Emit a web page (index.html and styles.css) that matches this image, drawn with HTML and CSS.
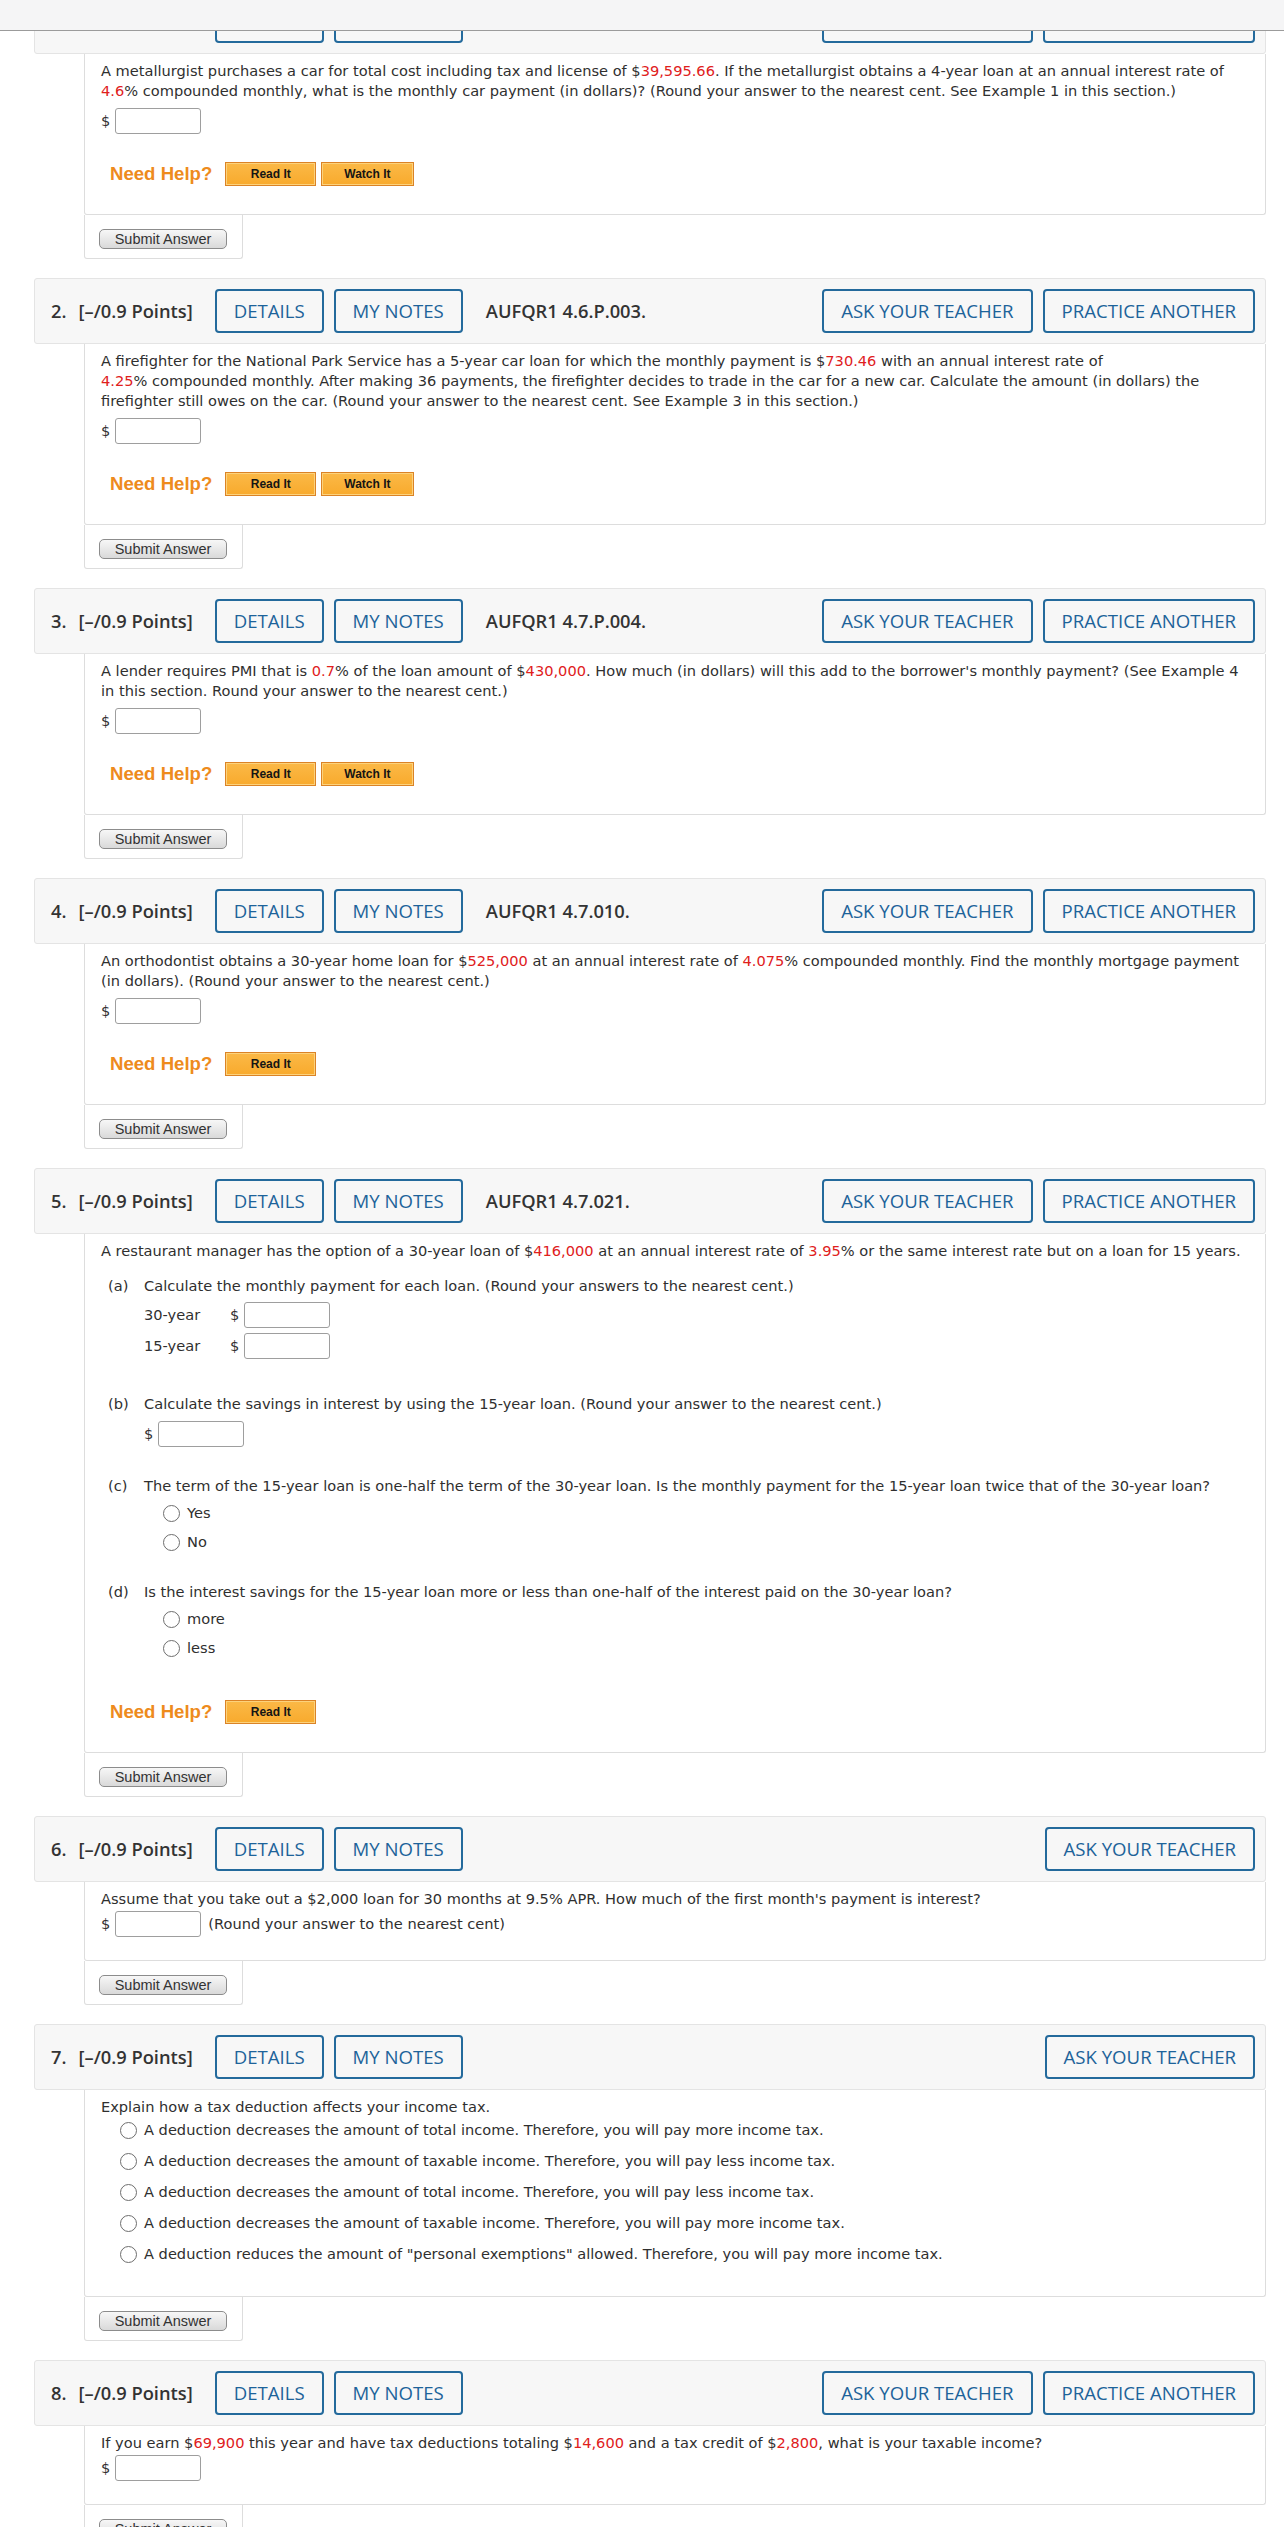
FILE: index.html
```html
<!DOCTYPE html>
<html lang="en">
<head>
<meta charset="utf-8">
<title>Assignment</title>
<link rel="stylesheet" href="styles.css">
</head>
<body>
<div class="topbar"></div>

<div class="questions">

  <!-- Q1 -->
  <section class="q">
    <div class="qhead">
      <span class="qnum">1.</span><span class="pts">[–/0.9 Points]</span>
      <button class="hbtn">DETAILS</button><button class="hbtn">MY NOTES</button>
      <span class="code">AUFQR1 4.6.P.001.</span>
      <span class="spacer"></span>
      <button class="hbtn">ASK YOUR TEACHER</button><button class="hbtn">PRACTICE ANOTHER</button>
    </div>
    <div class="qbody">
      <p class="stem">A metallurgist purchases a car for total cost including tax and license of $<span class="red">39,595.66</span>. If the metallurgist obtains a 4-year loan at an annual interest rate of <span class="red">4.6</span>% compounded monthly, what is the monthly car payment (in dollars)? (Round your answer to the nearest cent. See Example 1 in this section.)</p>
      <div class="ans"><span class="dollar">$</span><span class="inp"></span></div>
      <div class="help"><span class="nh">Need Help?</span><button class="hb">Read It</button><button class="hb">Watch It</button></div>
    </div>
    <div class="submit"><button class="sbtn">Submit Answer</button></div>
  </section>

  <!-- Q2 -->
  <section class="q">
    <div class="qhead">
      <span class="qnum">2.</span><span class="pts">[–/0.9 Points]</span>
      <button class="hbtn">DETAILS</button><button class="hbtn">MY NOTES</button>
      <span class="code">AUFQR1 4.6.P.003.</span>
      <span class="spacer"></span>
      <button class="hbtn">ASK YOUR TEACHER</button><button class="hbtn">PRACTICE ANOTHER</button>
    </div>
    <div class="qbody">
      <p class="stem">A firefighter for the National Park Service has a 5-year car loan for which the monthly payment is $<span class="red">730.46</span> with an annual interest rate of<br><span class="red">4.25</span>% compounded monthly. After making 36 payments, the firefighter decides to trade in the car for a new car. Calculate the amount (in dollars) the firefighter still owes on the car. (Round your answer to the nearest cent. See Example 3 in this section.)</p>
      <div class="ans"><span class="dollar">$</span><span class="inp"></span></div>
      <div class="help"><span class="nh">Need Help?</span><button class="hb">Read It</button><button class="hb">Watch It</button></div>
    </div>
    <div class="submit"><button class="sbtn">Submit Answer</button></div>
  </section>

  <!-- Q3 -->
  <section class="q">
    <div class="qhead">
      <span class="qnum">3.</span><span class="pts">[–/0.9 Points]</span>
      <button class="hbtn">DETAILS</button><button class="hbtn">MY NOTES</button>
      <span class="code">AUFQR1 4.7.P.004.</span>
      <span class="spacer"></span>
      <button class="hbtn">ASK YOUR TEACHER</button><button class="hbtn">PRACTICE ANOTHER</button>
    </div>
    <div class="qbody">
      <p class="stem">A lender requires PMI that is <span class="red">0.7</span>% of the loan amount of $<span class="red">430,000</span>. How much (in dollars) will this add to the borrower's monthly payment? (See Example 4 in this section. Round your answer to the nearest cent.)</p>
      <div class="ans"><span class="dollar">$</span><span class="inp"></span></div>
      <div class="help"><span class="nh">Need Help?</span><button class="hb">Read It</button><button class="hb">Watch It</button></div>
    </div>
    <div class="submit"><button class="sbtn">Submit Answer</button></div>
  </section>

  <!-- Q4 -->
  <section class="q">
    <div class="qhead">
      <span class="qnum">4.</span><span class="pts">[–/0.9 Points]</span>
      <button class="hbtn">DETAILS</button><button class="hbtn">MY NOTES</button>
      <span class="code">AUFQR1 4.7.010.</span>
      <span class="spacer"></span>
      <button class="hbtn">ASK YOUR TEACHER</button><button class="hbtn">PRACTICE ANOTHER</button>
    </div>
    <div class="qbody">
      <p class="stem">An orthodontist obtains a 30-year home loan for $<span class="red">525,000</span> at an annual interest rate of <span class="red">4.075</span>% compounded monthly. Find the monthly mortgage payment (in dollars). (Round your answer to the nearest cent.)</p>
      <div class="ans"><span class="dollar">$</span><span class="inp"></span></div>
      <div class="help"><span class="nh">Need Help?</span><button class="hb">Read It</button></div>
    </div>
    <div class="submit"><button class="sbtn">Submit Answer</button></div>
  </section>

  <!-- Q5 -->
  <section class="q">
    <div class="qhead">
      <span class="qnum">5.</span><span class="pts">[–/0.9 Points]</span>
      <button class="hbtn">DETAILS</button><button class="hbtn">MY NOTES</button>
      <span class="code">AUFQR1 4.7.021.</span>
      <span class="spacer"></span>
      <button class="hbtn">ASK YOUR TEACHER</button><button class="hbtn">PRACTICE ANOTHER</button>
    </div>
    <div class="qbody">
      <p class="stem">A restaurant manager has the option of a 30-year loan of $<span class="red">416,000</span> at an annual interest rate of <span class="red">3.95</span>% or the same interest rate but on a loan for 15 years.</p>

      <div class="part part-a">
        <span class="plabel">(a)</span>
        <div class="pcontent">
          <p class="ptext">Calculate the monthly payment for each loan. (Round your answers to the nearest cent.)</p>
          <div class="subrow first"><span class="sublabel">30-year</span><span class="dollar">$</span><span class="inp"></span></div>
          <div class="subrow"><span class="sublabel">15-year</span><span class="dollar">$</span><span class="inp"></span></div>
        </div>
      </div>

      <div class="part part-b">
        <span class="plabel">(b)</span>
        <div class="pcontent">
          <p class="ptext">Calculate the savings in interest by using the 15-year loan. (Round your answer to the nearest cent.)</p>
          <div class="ans"><span class="dollar">$</span><span class="inp"></span></div>
        </div>
      </div>

      <div class="part part-c">
        <span class="plabel">(c)</span>
        <div class="pcontent">
          <p class="ptext">The term of the 15-year loan is one-half the term of the 30-year loan. Is the monthly payment for the 15-year loan twice that of the 30-year loan?</p>
          <div class="opts indent">
            <label class="opt"><span class="radio"></span>Yes</label>
            <label class="opt"><span class="radio"></span>No</label>
          </div>
        </div>
      </div>

      <div class="part part-d">
        <span class="plabel">(d)</span>
        <div class="pcontent">
          <p class="ptext">Is the interest savings for the 15-year loan more or less than one-half of the interest paid on the 30-year loan?</p>
          <div class="opts indent">
            <label class="opt"><span class="radio"></span>more</label>
            <label class="opt"><span class="radio"></span>less</label>
          </div>
        </div>
      </div>

      <div class="help help-far"><span class="nh">Need Help?</span><button class="hb">Read It</button></div>
    </div>
    <div class="submit"><button class="sbtn">Submit Answer</button></div>
  </section>

  <!-- Q6 -->
  <section class="q">
    <div class="qhead">
      <span class="qnum">6.</span><span class="pts">[–/0.9 Points]</span>
      <button class="hbtn">DETAILS</button><button class="hbtn">MY NOTES</button>
      <span class="spacer"></span>
      <button class="hbtn">ASK YOUR TEACHER</button>
    </div>
    <div class="qbody qbody-short">
      <p class="stem">Assume that you take out a $2,000 loan for 30 months at 9.5% APR. How much of the first month's payment is interest?</p>
      <div class="ans tight"><span class="dollar">$</span><span class="inp"></span><span class="after">(Round your answer to the nearest cent)</span></div>
    </div>
    <div class="submit"><button class="sbtn">Submit Answer</button></div>
  </section>

  <!-- Q7 -->
  <section class="q">
    <div class="qhead">
      <span class="qnum">7.</span><span class="pts">[–/0.9 Points]</span>
      <button class="hbtn">DETAILS</button><button class="hbtn">MY NOTES</button>
      <span class="spacer"></span>
      <button class="hbtn">ASK YOUR TEACHER</button>
    </div>
    <div class="qbody qbody-mc">
      <p class="stem">Explain how a tax deduction affects your income tax.</p>
      <div class="opts mc">
        <label class="opt"><span class="radio"></span>A deduction decreases the amount of total income. Therefore, you will pay more income tax.</label>
        <label class="opt"><span class="radio"></span>A deduction decreases the amount of taxable income. Therefore, you will pay less income tax.</label>
        <label class="opt"><span class="radio"></span>A deduction decreases the amount of total income. Therefore, you will pay less income tax.</label>
        <label class="opt"><span class="radio"></span>A deduction decreases the amount of taxable income. Therefore, you will pay more income tax.</label>
        <label class="opt"><span class="radio"></span>A deduction reduces the amount of "personal exemptions" allowed. Therefore, you will pay more income tax.</label>
      </div>
    </div>
    <div class="submit"><button class="sbtn">Submit Answer</button></div>
  </section>

  <!-- Q8 -->
  <section class="q">
    <div class="qhead">
      <span class="qnum">8.</span><span class="pts">[–/0.9 Points]</span>
      <button class="hbtn">DETAILS</button><button class="hbtn">MY NOTES</button>
      <span class="spacer"></span>
      <button class="hbtn">ASK YOUR TEACHER</button><button class="hbtn">PRACTICE ANOTHER</button>
    </div>
    <div class="qbody qbody-short">
      <p class="stem">If you earn $<span class="red">69,900</span> this year and have tax deductions totaling $<span class="red">14,600</span> and a tax credit of $<span class="red">2,800</span>, what is your taxable income?</p>
      <div class="ans tight"><span class="dollar">$</span><span class="inp"></span></div>
    </div>
    <div class="submit"><button class="sbtn">Submit Answer</button></div>
  </section>

</div>
</body>
</html>
```

FILE: styles.css
```css
* { box-sizing: border-box; }

html, body {
  margin: 0;
  padding: 0;
  background: #ffffff;
}

body {
  font-family: "DejaVu Sans", Verdana, sans-serif;
  font-size: 14.6px;
  line-height: 20px;
  color: #2f2f2f;
}

p { margin: 0; }

button {
  font: inherit;
  margin: 0;
  cursor: pointer;
}

/* fixed page bar over the scrolled content */
.topbar {
  position: fixed;
  top: 0;
  left: 0;
  right: 0;
  height: 31px;
  background: #f5f5f6;
  border-bottom: 1px solid #9b9b9b;
  z-index: 10;
}

.questions {
  margin-top: -12px;
  padding: 0 18px 0 34px;
}

.q { margin-bottom: 19px; }

/* ---------- question header ---------- */
.qhead {
  display: flex;
  align-items: center;
  height: 66px;
  padding: 0 10px 0 16px;
  background: #f7f7f7;
  border: 1px solid #e4e4e4;
  border-radius: 3px;
  font-family: "Open Sans", "Liberation Sans", sans-serif;
  color: #333333;
}

.qnum, .pts, .code {
  font-size: 18.3px;
  font-weight: 600;
  line-height: 24px;
  white-space: nowrap;
}

.qnum { margin-right: 12px; }
.pts { margin-right: 22px; }
.code { margin-left: 23px; }

.spacer { flex: 1; }

.hbtn {
  height: 44px;
  padding: 0 17px;
  border: 2px solid #246a9c;
  border-radius: 4px;
  background: transparent;
  color: #1d639a;
  font-family: "Open Sans", "Liberation Sans", sans-serif;
  font-size: 18.6px;
  font-weight: 400;
  line-height: 24px;
  white-space: nowrap;
}

.hbtn + .hbtn { margin-left: 10px; }

/* ---------- question body ---------- */
.qbody {
  margin-left: 50px;
  padding: 7px 12px 28px 16px;
  border: 1px solid #dddddd;
  border-top: none;
  border-radius: 0 0 3px 3px;
}

.qbody-short { padding-bottom: 23px; }
.qbody-mc { padding-bottom: 32px; }

.red { color: #e0201c; }

.ans {
  display: flex;
  align-items: center;
  height: 26px;
  margin-top: 7px;
}

.ans.tight { margin-top: 2px; }

.dollar { margin-right: 5px; }

.inp {
  display: inline-block;
  width: 86px;
  height: 26px;
  border: 1px solid #9e9e9e;
  border-radius: 3px;
  background: #ffffff;
  flex: none;
}

.after { margin-left: 7px; }

/* ---------- need help ---------- */
.help {
  display: flex;
  align-items: center;
  height: 24px;
  margin-top: 28px;
  padding-left: 9px;
}

.help-far { margin-top: 42px; }

.nh {
  font-family: "Liberation Sans", Arial, sans-serif;
  font-weight: bold;
  font-size: 18.6px;
  line-height: 24px;
  color: #ee8b1d;
  margin-right: 13px;
  white-space: nowrap;
}

.hb {
  height: 24px;
  min-width: 91px;
  padding: 0 22px;
  margin-right: 5px;
  font-family: "Liberation Sans", Arial, sans-serif;
  font-weight: bold;
  font-size: 12px;
  line-height: 20px;
  color: #151515;
  background: linear-gradient(#fbb947, #f8aa2d);
  border: 1px solid #db8326;
  box-shadow: inset 0 0 0 1px #fcd27c;
}

/* ---------- submit ---------- */
.submit {
  margin-left: 50px;
  width: 159px;
  padding: 14px 0 9px 14px;
  border: 1px solid #dddddd;
  border-top: none;
  border-radius: 0 0 3px 3px;
}

.sbtn {
  display: block;
  width: 128px;
  height: 20px;
  padding: 0;
  font-family: "Liberation Sans", Arial, sans-serif;
  font-size: 14.5px;
  line-height: 18px;
  color: #333333;
  background: linear-gradient(#f7f7f7, #d9d9d9);
  border: 1px solid #8c8c8c;
  border-radius: 5px;
}

/* ---------- multi part ---------- */
.part {
  display: flex;
  margin-left: 7px;
}

.plabel {
  width: 36px;
  flex: none;
}

.pcontent { flex: 1; }

.part-a { margin-top: 15px; }
.part-b { margin-top: 35px; }
.part-c { margin-top: 29px; }
.part-d { margin-top: 30px; }

.subrow {
  display: flex;
  align-items: center;
  height: 26px;
  margin-top: 5px;
}

.subrow.first { margin-top: 6px; }

.sublabel { width: 86px; flex: none; }

/* ---------- radio options ---------- */
.opts {
  display: flex;
  flex-direction: column;
  gap: 9px;
  margin-top: 7px;
}

.opts.indent { padding-left: 19px; }

.opts.mc {
  gap: 11px;
  margin-top: 3px;
  padding-left: 19px;
}

.opt {
  display: flex;
  align-items: center;
  height: 20px;
}

.radio {
  width: 17px;
  height: 17px;
  flex: none;
  margin-right: 7px;
  border: 1.5px solid #6e6e6e;
  border-radius: 50%;
  background: #ffffff;
}
```
